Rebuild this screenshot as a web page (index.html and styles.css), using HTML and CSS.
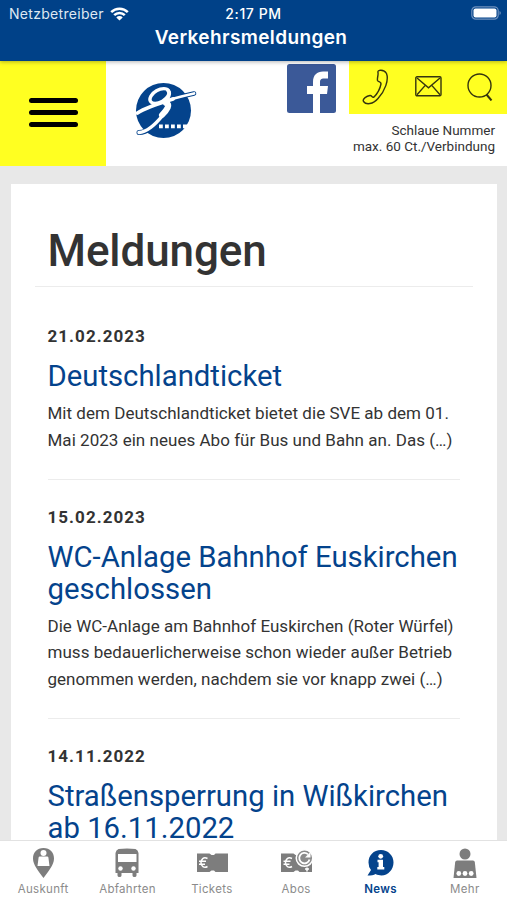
FILE: index.html
```html
<!DOCTYPE html>
<html lang="de">
<head>
    <meta charset="UTF-8">
    <meta name="viewport" content="width=device-width, initial-scale=1.0">
    <title>Verkehrsmeldungen</title>
    <link rel="stylesheet" href="styles.css">
</head>
<body>
    <div class="navbar">
        <div class="status">
            <div class="carrier">
                <span>Netzbetreiber</span>
                <svg class="wifi" viewBox="0 0 19 14">
                    <path d="M1.2 5.2a11.7 11.7 0 0 1 16.6 0M4.2 8.2a7.5 7.5 0 0 1 10.6 0" fill="none" stroke="#fff" stroke-width="2.5"/>
                    <path d="M9.5 13.6L6.3 10.4a4.6 4.6 0 0 1 6.4 0z" fill="#fff"/>
                </svg>
            </div>
            <span class="time">2:17 PM</span>
            <svg class="battery" viewBox="0 0 30 14">
                <rect x=".8" y=".8" width="26.4" height="12.4" rx="4" fill="none" stroke="#6f91bd" stroke-width="1.2"/>
                <rect x="2.5" y="2.5" width="23" height="9" rx="2" fill="#fff"/>
                <path d="M28.5 5v4q1.3-.6 1.3-2t-1.3-2z" fill="#6f91bd"/>
            </svg>
        </div>
        <div class="title">Verkehrsmeldungen</div>
    </div>

    <main>
        <header>
            <a class="menu" href="#"><span></span><span></span><span></span></a>
            <a class="logo" href="#">
                <svg viewBox="0 0 66 60">
                    <circle cx="30.5" cy="29.5" r="27.5" fill="#04438c"/>
                    <g fill="none" stroke-linecap="round" stroke-linejoin="round">
                        <path d="M6 51.5C10 51.500 14 50 18 47" stroke="#04438c" stroke-width="5"/>
                        <path d="M48 15.5L61 12.5" stroke="#04438c" stroke-width="4.6"/>
                        <path d="M26 22C38 18 50 15 61 12.5" stroke="#fff" stroke-width="2.8"/>
                        <path d="M4.500 32C12 27 22 23.500 40 18" stroke="#fff" stroke-width="3.800"/>
                        <ellipse cx="26.500" cy="15" rx="10.500" ry="6" transform="rotate(-30 26.500 15)" stroke="#fff" stroke-width="3.400"/>
                        <path d="M35 9.500Q38 13 34 18" stroke="#fff" stroke-width="3.600"/>
                        <path d="M33 22C38 23 34 29 29 34" stroke="#fff" stroke-width="6"/>
                        <path d="M30 34C22 44 14 51 6 51.500" stroke="#fff" stroke-width="3.500"/>
                    </g>
                    <path d="M26 43.500h3.800v3.800h-3.800zM32 43.500h3.800v3.800h-3.800zM38 43.500h3.800v3.800h-3.800zM44 43.500h3.800v3.800h-3.800zM50 43.500h5v3.800h-5z" fill="#fff"/>
                </svg>
            </a>
            <a class="facebook" href="#">
                <svg viewBox="0 0 49 49">
                    <rect width="49" height="49" rx="2.5" fill="#3b5998"/>
                    <path d="M26 49V30h-6v-8h6v-4c0-7 4-10.500 10-10.500h5v7h-4c-3 0-4 1-4 4V22h8l-1 8h-7v19z" fill="#fff"/>
                </svg>
            </a>
            <div class="service">
                <div class="service-icons">
                    <svg width="27" height="36" viewBox="0 0 27 36">
                        <path d="M16 3.500C15 .5 22 0 24.500 4.500C27 11 23 22 16 29.500C11 35.500 4 36 1.500 32.500C0 29.500 5 27 8 26.500C10 26.200 10 29 12 28C15 25 18 20 19 15C19.400 12.500 16.500 13.500 15.500 11.500C15 9 16.500 6 16 3.500z"/>
                    </svg>
                    <svg width="27" height="21" viewBox="0 0 27 21">
                        <rect x=".8" y=".8" width="25.200" height="19" rx="1.200"/>
                        <path d="M2 2l11.500 9.800L25 2M2 18.800l8-9.200M25 18.800l-8-9.200"/>
                    </svg>
                    <svg width="26" height="29" viewBox="0 0 26 29">
                        <circle cx="12.500" cy="13.500" r="11.500"/>
                        <path d="M19.500 22.500l5 6" stroke-width="2"/>
                    </svg>
                </div>
                <p>Schlaue Nummer<br>max. 60 Ct./Verbindung</p>
            </div>
        </header>

        <div class="content">
            <h1>Meldungen</h1>
            <article>
                <time>21.02.2023</time>
                <h2><a href="#">Deutschlandticket</a></h2>
                <p>Mit dem Deutschlandticket bietet die SVE ab dem 01. Mai 2023 ein neues Abo für Bus und Bahn an. Das (…)</p>
            </article>
            <article>
                <time>15.02.2023</time>
                <h2><a href="#">WC-Anlage Bahnhof Euskirchen geschlossen</a></h2>
                <p>Die WC-Anlage am Bahnhof Euskirchen (Roter Würfel) muss bedauerlicherweise schon wieder außer Betrieb genommen werden, nachdem sie vor knapp zwei (…)</p>
            </article>
            <article>
                <time>14.11.2022</time>
                <h2><a href="#">Straßensperrung in Wißkirchen ab 16.11.2022</a></h2>
            </article>
        </div>
    </main>

    <nav class="tabbar">
        <a href="#">
            <svg viewBox="0 0 36 32">
                <path d="M18.500 1C12 1 8 5.500 8 11.500C8 18 13.500 24 18.500 31C23.500 24 29 18 29 11.500C29 5.500 25 1 18.500 1z"/>
                <circle class="cut" cx="18.500" cy="6" r="3"/>
                <path class="cut" d="M14.800 9.500h7.400q1 0 1.200 1l1.100 8.500h-12l1.100-8.500q.2-1 1.200-1z"/>
            </svg>
            <span>Auskunft</span>
        </a>
        <a href="#">
            <svg viewBox="0 0 36 32">
                <path d="M9.500 2Q18 .8 26.500 2Q29 3 29.500 6v20h-2v2.500q0 1.500-2 1.500t-2-1.500V26h-11v2.500q0 1.500-2 1.500t-2-1.500V26h-2V6Q7 3 9.500 2z"/>
                <rect class="cut" x="9" y="7" width="18.500" height="8"/>
                <circle class="cut" cx="11.500" cy="21.500" r="2.200"/>
                <circle class="cut" cx="24.500" cy="21.500" r="2.200"/>
            </svg>
            <span>Abfahrten</span>
        </a>
        <a href="#">
            <svg viewBox="0 0 36 32">
                <path d="M3 6.500h12.500l2 1.500h2.500l1.500-1.500h12.500V25H21.500L20 23.500h-2.500l-2 1.500H3z"/>
                <path class="line" d="M13.500 11.500c-4-2-6.500.8-6.500 4.200s3 5.800 6.500 3.800M5 14.300h7M5 17.300h6"/>
            </svg>
            <span>Tickets</span>
        </a>
        <a href="#">
            <svg viewBox="0 0 36 32">
                <path d="M3 6.500h12.500l2 1.500h3L34 13v12H21.500L20 23.500h-2.500l-2 1.500H3z"/>
                <path class="line" d="M14 11.500c-4-2-6.500.8-6.500 4.200s3 5.800 6.500 3.800M5.500 14.300h7M5.500 17.300h6"/>
                <circle cx="26.500" cy="11" r="8.300" class="ring"/>
                <path class="refresh" d="M31.500 12.500a5.200 5.200 0 1 1-1.500-5.200"/>
                <path class="arrow" d="M32.500 5v5.500h-5.500z"/>
                <path class="line" d="M29 20.500v4M27 22h4"/>
            </svg>
            <span>Abos</span>
        </a>
        <a class="active" href="#">
            <svg viewBox="0 0 36 32">
                <path d="M19 3C11.500 3 6.500 8.500 6.500 15.500Q6.500 20 9 23l-3.500 5.500Q11 28.500 13.500 27C23 31.500 31.500 24.500 31.500 15.500C31.500 8.500 26 3 19 3z"/>
                <circle class="cut" cx="18.700" cy="9.300" r="2.400"/>
                <path class="cut" d="M15.500 12.700h5.500V20h1.300v2.500h-7V20h1.300v-4.800h-1.100z"/>
            </svg>
            <span>News</span>
        </a>
        <a href="#">
            <svg viewBox="0 0 36 32">
                <circle cx="18" cy="7" r="5.500"/>
                <path d="M10 13.500h16q1.500 0 1.800 1.500l1.700 16h-23l1.700-16q.3-1.500 1.800-1.500z"/>
                <circle class="cut" cx="11.800" cy="26.500" r="2.400"/>
                <circle class="cut" cx="18" cy="26.500" r="2.400"/>
                <circle class="cut" cx="24.200" cy="26.500" r="2.400"/>
            </svg>
            <span>Mehr</span>
        </a>
    </nav>
</body>
</html>
```

FILE: styles.css
```css
* {
    box-sizing: border-box;
}
body {
    margin: 0;
    height: 900px;
    display: flex;
    flex-direction: column;
    overflow: hidden;
    background-color: #e8e8e8;
    font-family: Roboto, sans-serif;
    color: #333;
}
a {
    color: #04438c;
    text-decoration: none;
}
h1, h2, p {
    margin: 0;
}
.navbar {
    flex: none;
    height: 61px;
    background-color: #004188;
    color: #fff;
    font-family: Inter, sans-serif;
    z-index: 1;
    box-shadow: 0 1px 4px rgba(0, 0, 0, 0.3);
}
.status {
    display: grid;
    grid-template-columns: 1fr auto 1fr;
    align-items: center;
    height: 27px;
    padding: 0 6px 0 9px;
    font-size: 14px;
}
.carrier {
    display: flex;
    align-items: center;
    gap: 6px;
    letter-spacing: 0.3px;
    color: #dfe8f2;
}
.wifi {
    width: 19px;
    height: 14px;
}
.time {
    font-weight: 500;
    font-size: 14px;
    letter-spacing: 0.6px;
    padding-right: 3px;
}
.battery {
    width: 30px;
    height: 14px;
    justify-self: end;
    margin-top: -2px;
}
.title {
    text-align: center;
    font-size: 19px;
    line-height: 22px;
    font-weight: 600;
    letter-spacing: 0.38px;
    padding-right: 5px;
}
main {
    flex: 1;
    min-height: 0;
    overflow: hidden;
}
header {
    display: flex;
    height: 105px;
    background-color: #fff;
}
.menu {
    width: 106px;
    background-color: #ffff21;
    display: flex;
    flex-direction: column;
    align-items: center;
    justify-content: center;
    gap: 7px;
    padding-bottom: 2px;
}
.menu span {
    width: 49px;
    height: 5px;
    border-radius: 3px;
    background-color: #000;
}
.logo {
    width: 181px;
    padding: 20px 0 0 27px;
}
.logo svg {
    width: 66px;
    height: 60px;
}
.facebook {
    width: 62px;
    padding-top: 3px;
}
.facebook svg {
    display: block;
    width: 49px;
    height: 49px;
}
.service {
    flex: 1;
}
.service-icons {
    height: 53px;
    padding: 0 14px 2px 13px;
    background-color: #ffff21;
    display: flex;
    align-items: center;
    justify-content: space-between;
}
.service-icons svg {
    fill: none;
    stroke: #35350f;
    stroke-width: 1.4;
}
.service p {
    padding: 8px 12px 0 0;
    text-align: right;
    font-size: 13.5px;
    line-height: 16px;
    white-space: nowrap;
}
.content {
    min-height: 700px;
    margin: 18px 10px 0 11px;
    padding: 40px 24px 0;
    background-color: #fff;
}
h1 {
    height: 63px;
    padding-left: 12.5px;
    border-bottom: 1px solid #ececec;
    font-size: 44px;
    line-height: 54px;
    font-weight: 500;
    letter-spacing: -0.1px;
}
article {
    margin: 0 13px 0 12.5px;
    padding: 23.5px 0 25.5px;
    border-bottom: 1px solid #ececec;
}
h1 + article {
    padding-top: 36px;
}
time {
    display: block;
    margin-bottom: 10px;
    font-size: 17px;
    line-height: 27px;
    font-weight: 700;
    letter-spacing: 1.05px;
}
h2 {
    font-size: 29.3px;
    line-height: 32px;
    font-weight: 400;
}
article p {
    margin-top: 8px;
    font-size: 17px;
    line-height: 26.8px;
    letter-spacing: 0.03px;
}
.tabbar {
    flex: none;
    height: 60px;
    display: grid;
    grid-template-columns: repeat(6, 1fr);
    padding: 6px 0 0 1px;
    border-top: 1px solid #e2e2e2;
    background-color: #fff;
    font-family: Inter, sans-serif;
    font-size: 11.5px;
    letter-spacing: 0.3px;
}
.tabbar a {
    display: flex;
    flex-direction: column;
    align-items: center;
    color: #8b8b8b;
}
.tabbar svg {
    width: 36px;
    height: 32px;
    fill: #7d7d7d;
}
.tabbar span {
    margin-top: 2px;
    line-height: 16px;
}
.tabbar .cut {
    fill: #fff;
}
.tabbar .line {
    fill: none;
    stroke: #fff;
    stroke-width: 1.5;
}
.tabbar .ring {
    fill: #8b8b8b;
    stroke: #fff;
    stroke-width: 1.5;
}
.tabbar .refresh {
    fill: none;
    stroke: #fff;
    stroke-width: 1.8;
}
.tabbar .arrow {
    fill: #fff;
}
.tabbar .active {
    color: #04438c;
    font-weight: 600;
}
.tabbar .active svg {
    fill: #04438c;
}
```
